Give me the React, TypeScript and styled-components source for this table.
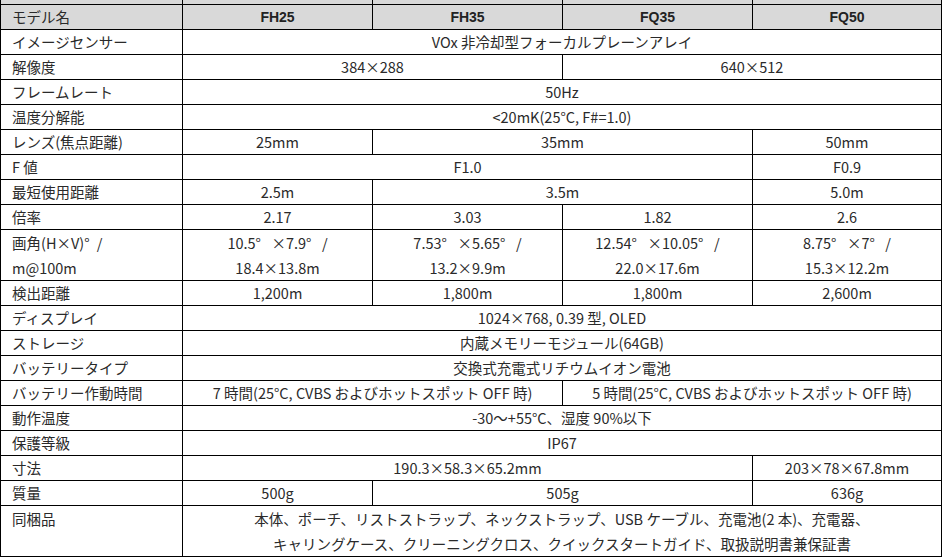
import styled, { createGlobalStyle } from "styled-components";

const GlobalStyle = createGlobalStyle`
  html, body {
    margin: 0;
    padding: 0;
    background: #ffffff;
  }
  body {
    font-family: "Noto Sans CJK JP", "Noto Sans", sans-serif;
    color: #2a2a2a;
  }
`;

const Sheet = styled.div`
  width: 945px;
  height: 560px;
  overflow: hidden;
`;

const SpecTable = styled.table`
  width: 942px;
  table-layout: fixed;
  border-collapse: collapse;
  font-size: 14.5px;
`;

const Col = styled.col<{ $w: number }>`
  width: ${(p) => p.$w}px;
`;

const Cell = styled.td<{ $lines?: number }>`
  border: 1px solid #000000;
  padding: 0;
  height: ${(p) => (p.$lines && p.$lines > 1 ? p.$lines * 25 : 24)}px;
  line-height: ${(p) => (p.$lines && p.$lines > 1 ? 25 : 24)}px;
  text-align: center;
  vertical-align: middle;
  white-space: nowrap;
  font-weight: 400;
`;

const Label = styled(Cell)`
  text-align: left;
  padding-left: 11px;
  vertical-align: top;
`;

const HeadRow = styled.tr`
  background: #d9d9d9;
`;

const HeadCell = styled(Cell)`
  font-family: "Liberation Sans", Arial, sans-serif;
  font-weight: 700;
  font-size: 14px;
  color: #222222;
`;

const HeadLabel = styled(Label)`
  font-weight: 400;
`;

const StripCell = styled.td`
  height: 4px;
  padding: 0;
  border: 1px solid #000000;
  border-top: none;
  font-size: 0;
  line-height: 0;
`;

type Value = { text: string; span?: number };

type SpecRow = { label: string; values: Value[]; lines?: number };

const columns = [182, 190, 190, 190, 189];

const models = ["FH25", "FH35", "FQ35", "FQ50"];

const rows: SpecRow[] = [
  { label: "イメージセンサー", values: [{ text: "VOx 非冷却型フォーカルプレーンアレイ", span: 4 }] },
  {
    label: "解像度",
    values: [
      { text: "384×288", span: 2 },
      { text: "640×512", span: 2 },
    ],
  },
  { label: "フレームレート", values: [{ text: "50Hz", span: 4 }] },
  { label: "温度分解能", values: [{ text: "<20mK(25°C, F#=1.0)", span: 4 }] },
  {
    label: "レンズ(焦点距離)",
    values: [{ text: "25mm" }, { text: "35mm", span: 2 }, { text: "50mm" }],
  },
  { label: "F 値", values: [{ text: "F1.0", span: 3 }, { text: "F0.9" }] },
  {
    label: "最短使用距離",
    values: [{ text: "2.5m" }, { text: "3.5m", span: 2 }, { text: "5.0m" }],
  },
  {
    label: "倍率",
    values: [{ text: "2.17" }, { text: "3.03" }, { text: "1.82" }, { text: "2.6" }],
  },
  {
    label: "画角(H×V)°\u2002/\nm@100m",
    lines: 2,
    values: [
      { text: "10.5°\u2002 ×7.9°\u2002 /\n18.4×13.8m" },
      { text: "7.53°\u2002 ×5.65°\u2002 /\n13.2×9.9m" },
      { text: "12.54°\u2002 ×10.05°\u2002 /\n22.0×17.6m" },
      { text: "8.75°\u2002 ×7°\u2002 /\n15.3×12.2m" },
    ],
  },
  {
    label: "検出距離",
    values: [
      { text: "1,200m" },
      { text: "1,800m" },
      { text: "1,800m" },
      { text: "2,600m" },
    ],
  },
  { label: "ディスプレイ", values: [{ text: "1024×768, 0.39 型, OLED", span: 4 }] },
  { label: "ストレージ", values: [{ text: "内蔵メモリーモジュール(64GB)", span: 4 }] },
  { label: "バッテリータイプ", values: [{ text: "交換式充電式リチウムイオン電池", span: 4 }] },
  {
    label: "バッテリー作動時間",
    values: [
      { text: "7 時間(25°C, CVBS およびホットスポット OFF 時)", span: 2 },
      { text: "5 時間(25°C, CVBS およびホットスポット OFF 時)", span: 2 },
    ],
  },
  { label: "動作温度", values: [{ text: "-30～+55°C、湿度 90%以下", span: 4 }] },
  { label: "保護等級", values: [{ text: "IP67", span: 4 }] },
  {
    label: "寸法",
    values: [
      { text: "190.3×58.3×65.2mm", span: 3 },
      { text: "203×78×67.8mm" },
    ],
  },
  {
    label: "質量",
    values: [{ text: "500g" }, { text: "505g", span: 2 }, { text: "636g" }],
  },
  {
    label: "同梱品",
    lines: 2,
    values: [
      {
        text:
          "本体、ポーチ、リストストラップ、ネックストラップ、USB ケーブル、充電池(2 本)、充電器、\nキャリングケース、クリーニングクロス、クイックスタートガイド、取扱説明書兼保証書",
        span: 4,
      },
    ],
  },
];

function Lines({ text }: { text: string }) {
  const parts = text.split("\n");
  return (
    <>
      {parts.map((p, i) => (
        <span key={i}>
          {p}
          {i < parts.length - 1 && <br />}
        </span>
      ))}
    </>
  );
}

export default function App() {
  return (
    <Sheet>
      <GlobalStyle />
      <SpecTable>
        <colgroup>
          {columns.map((w, i) => (
            <Col key={i} $w={w} />
          ))}
        </colgroup>
        <tbody>
          <HeadRow>
            {columns.map((_, i) => (
              <StripCell key={i} />
            ))}
          </HeadRow>
          <HeadRow>
            <HeadLabel>モデル名</HeadLabel>
            {models.map((m) => (
              <HeadCell key={m}>{m}</HeadCell>
            ))}
          </HeadRow>
          {rows.map((row) => (
            <tr key={row.label}>
              <Label $lines={row.lines}>
                <Lines text={row.label} />
              </Label>
              {row.values.map((v, i) => (
                <Cell key={i} colSpan={v.span} $lines={row.lines}>
                  <Lines text={v.text} />
                </Cell>
              ))}
            </tr>
          ))}
        </tbody>
      </SpecTable>
    </Sheet>
  );
}
